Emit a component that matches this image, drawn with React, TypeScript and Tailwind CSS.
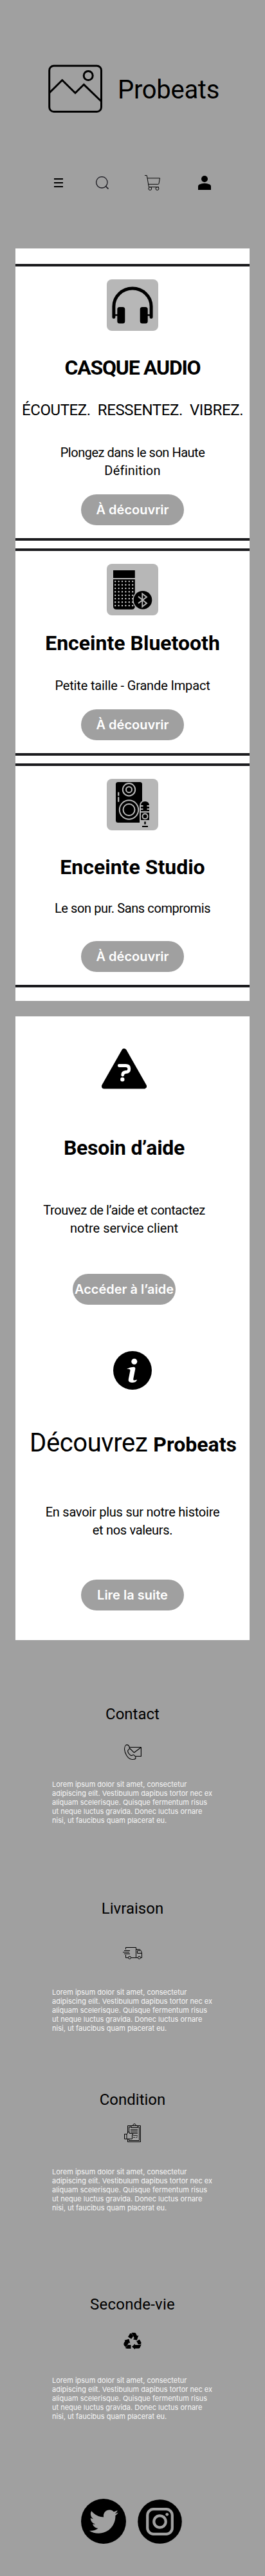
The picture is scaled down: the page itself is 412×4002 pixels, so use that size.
import type { ReactNode } from "react";
import { FaTwitter } from "react-icons/fa";

const LOREM = [
  "Lorem ipsum dolor sit amet, consectetur",
  "adipiscing elit. Vestibulum dapibus tortor nec ex",
  "aliquam scelerisque. Quisque fermentum risus",
  "ut neque luctus gravida. Donec luctus ornare",
  "nisi, ut faucibus quam placerat eu.",
];

function LogoIcon() {
  return (
    <svg width="84" height="75" viewBox="0 0 84 75" fill="none" stroke="#000" strokeWidth="3">
      <rect x="1.7" y="2.2" width="80.8" height="71.3" rx="7" />
      <circle cx="62.2" cy="17.5" r="7" />
      <path d="M2 44L21.7 24.5L42 44.5L55.4 31.3L82 57" />
    </svg>
  );
}

function MenuIcon() {
  return (
    <svg width="14" height="14" viewBox="0 0 14 14" stroke="#000" strokeWidth="1.9">
      <path d="M0 1h14M0 7h14M0 13h14" />
    </svg>
  );
}

function SearchIcon() {
  return (
    <svg width="20" height="20" viewBox="0 0 20 20" fill="none" stroke="#1c1b22" strokeWidth="1.3">
      <circle cx="9.3" cy="9.3" r="8.7" />
      <path d="M15.5 15.5L19.5 19.5" strokeWidth="1.7" />
    </svg>
  );
}

function CartIcon() {
  return (
    <svg width="24" height="24" viewBox="0 0 24 24" fill="none" stroke="#000" strokeWidth=".95">
      <path d="M0 .6H3.3L6.400 18.5H22M3.9 4.8H23.5L22 13.3Q21.8 14.3 20.8 14.3H5.7" />
      <circle cx="8.3" cy="21" r="2.4" />
      <circle cx="19.5" cy="21" r="2.4" />
    </svg>
  );
}

function UserIcon() {
  return (
    <svg width="20" height="22" viewBox="0 0 20 22" fill="#000">
      <circle cx="10" cy="5" r="5" />
      <path d="M0 22V16.5Q0 14.5 2 13.6Q6 11.8 10 11.8T18 13.6Q20 14.5 20 16.5V22Z" />
    </svg>
  );
}

function HeadphonesIcon() {
  return (
    <svg width="80" height="80" viewBox="0 0 80 80">
      <path d="M10.9 58.5V42A29.1 28 0 0 1 69.1 42V58.5" fill="none" stroke="#000" strokeWidth="5" strokeLinecap="round" />
      <path d="M11 55.5H20M60 55.5H69" stroke="#000" strokeWidth="2.6" />
      <rect x="16.3" y="43" width="12" height="25.5" rx="3.5" />
      <rect x="51.7" y="43" width="12" height="25.5" rx="3.5" />
    </svg>
  );
}

function BluetoothSpeakerIcon() {
  const dots: ReactNode[] = [];
  for (let row = 0; row < 8; row++) {
    for (let col = 0; col < 6; col++) {
      dots.push(<circle key={`${row}-${col}`} cx={13.2 + col * 5.4} cy={27.3 + row * 5.37} r="1.15" fill="#e4e4e4" />);
    }
  }
  return (
    <svg width="80" height="80" viewBox="0 0 80 80">
      <path d="M10 10H43.8V22H10ZM10 24H43.8V66Q43.8 70.8 39 70.8H15Q10 70.8 10 66Z" />
      {dots}
      <circle cx="56" cy="56.2" r="15.8" fill="#b7b7b7" />
      <circle cx="56" cy="56.2" r="14.3" />
      <path d="M49 50.7L62 61.2L55.3 66.5V46.5L62 51.5L49 61.2" fill="none" stroke="#b7b7b7" strokeWidth="1.9" />
    </svg>
  );
}

function StudioSpeakerIcon() {
  return (
    <svg width="80" height="80" viewBox="0 0 80 80" fill="none" stroke="#b7b7b7">
      <rect x="14" y="5" width="41" height="63" rx="3.5" fill="#000" stroke="none" />
      <circle cx="34.5" cy="16.7" r="9.7" strokeWidth="2" />
      <circle cx="34.5" cy="16.7" r="4.5" strokeWidth="2" />
      <circle cx="34.5" cy="48" r="14.7" strokeWidth="2" />
      <circle cx="34.5" cy="48" r="9" strokeWidth="2" />
      <path d="M18.2 21.5v4M18.2 29v6" strokeWidth="2.2" strokeLinecap="round" />
      <path d="M51 68V42Q51 33.5 59.5 33.5Q68 33.5 68 42V68Z" fill="#b7b7b7" stroke="none" />
      <path d="M53 41Q53.5 35 59.5 35T66 41H62.5V43.3H66V46H62.5V48H66V50.3H53V48H56.5V46H53V43.3H56.5V41Z" fill="#000" stroke="none" />
      <rect x="53" y="52.5" width="13" height="11.5" fill="#000" stroke="none" />
      <circle cx="59.5" cy="58.3" r="4" fill="#000" strokeWidth="2" />
      <path d="M59.5 66.5v4" stroke="#000" strokeWidth="2.5" />
      <path d="M55 74h9" stroke="#000" strokeWidth="2" />
    </svg>
  );
}

function HelpIcon() {
  return (
    <svg width="70" height="63" viewBox="0 0 70 63">
      <path d="M35 4L66 58.5H4Z" stroke="#000" strokeWidth="8" strokeLinejoin="round" />
      <path d="M27.3 26.5H37.5Q42.8 26.5 42.8 31.5T37.5 36.5Q32.7 37 32.7 41" fill="none" stroke="#fff" strokeWidth="4.8" strokeLinecap="round" />
      <circle cx="32.3" cy="48" r="3.2" fill="#fff" />
    </svg>
  );
}

function InfoIcon() {
  return (
    <svg width="60" height="60" viewBox="0 0 60 60">
      <circle cx="30" cy="30" r="30" />
      <circle cx="32.8" cy="16.3" r="4.5" fill="#fff" />
      <path d="M21 28Q27 24.500 32 24.8Q34.8 25 34.3 28L31.2 43.5Q30.9 45.8 33.5 45.3L37 44.5Q36.5 48 31.500 48.8Q22.5 49.8 23.8 43.5L26.4 30.5Q26.7 28 24.5 28Z" fill="#fff" />
    </svg>
  );
}

function ContactIcon() {
  return (
    <svg width="27" height="24" viewBox="0 0 27 24" fill="none" stroke="#000" strokeWidth="1.1" strokeLinejoin="round">
      <path d="M4 .6C1.5 1 .5 5 .6 8C1 14 5.5 21.5 10.5 23C13 23.8 16.5 23.3 17.8 22C18.5 19.5 16.5 17 14.5 16.3C12.5 16.5 12 18 10.5 17.3C8.5 16 6 12.5 5.6 10.3C5.5 8.5 8 8 8.3 6.5C8.5 3.5 7 .5 4 .6Z" />
      <path d="M8 4.5H26.4V18.5H17.8M8.5 6L15.5 12.8L26.2 4.8" />
    </svg>
  );
}

function TruckIcon() {
  return (
    <svg width="30" height="19" viewBox="0 0 30 19" fill="none" stroke="#000" strokeWidth="1">
      <path d="M4.5 3.5V.5H20.5V16.5H13M4.5 12V16.5H8M2 5.5H11M0 8H10M2 10.5H11M20.5 3.5H26.5Q29.5 6 29.5 10V16.5H28M22.5 5.5V9.5H29M22.5 5.5H27M20.5 16.5H23" />
      <circle cx="10.5" cy="16.3" r="2" />
      <circle cx="25.5" cy="16.3" r="2" />
    </svg>
  );
}

function ConditionIcon() {
  return (
    <svg width="26" height="29" viewBox="0 0 26 29" fill="none" stroke="#000" strokeWidth="1">
      <path d="M5.5 15V3.5H25.5V28.5H5.5V24M7.5 13V5.5H11M21 5.5H23.5V26.5H7.5V24" />
      <path d="M11 6.5V3.5H13.5Q14 .5 16 .5T18.5 3.5H21V6.5Z" />
      <path d="M10 9.5H21M10 11.5H21M10 13.5H21M12 15.5H21M14 18.5H21M14 21.5H17M18 22L21 20.5" strokeWidth=".8" />
      <path d="M.5 16.5H4V24H.5ZM4 17L7 12.5Q8.5 12 8.5 15.5H13.5V17.5H12.5V24H4" />
    </svg>
  );
}

function RecycleIcon() {
  return (
    <svg width="28" height="26" viewBox="0 0 28 26" fill="#000">
      <path d="M7 6.5L10.2 1.3Q11.700 .2 13.2 2L15.2 5.200L12.2 9.800Z" />
      <path d="M12.5 0H17Q18.500 0 19.3 1.3L21.2 5L23.3 4.2L20.8 11.8L14.800 10.200L16.800 8.600Z" />
      <path d="M20.200 13.2L24.8 10.5L27.2 14.5Q28.3 17 26 18.2H23Z" />
      <path d="M27.800 18.200L25.500 23.300Q24.800 24.600 23.300 24.600H18V26L13 21.800L18 17.200V19H24.500Q26.500 19 27.800 18.200Z" />
      <path d="M1.500 11.800L8.500 9.800L10.300 16.500L8.300 15.500L4.500 22Q2.500 22.500 .8 19.500Q-.2 17.500 1 15.500L2.600 12.800Z" />
      <path d="M6.500 19H11.500V24.800H5.500Q3.500 24.800 2.500 23Q4.800 22.800 6.500 19Z" />
    </svg>
  );
}

function InstagramIcon() {
  return (
    <svg width="69" height="69" viewBox="0 0 69 69" fill="none" stroke="#a0a0a0">
      <circle cx="34.5" cy="34.5" r="34.3" fill="#000" stroke="none" />
      <rect x="15.2" y="15.2" width="38.6" height="38.6" rx="9.5" strokeWidth="4.2" />
      <circle cx="34.5" cy="34.5" r="9.2" strokeWidth="4.2" />
      <circle cx="45.7" cy="23.3" r="2.4" fill="#a0a0a0" stroke="none" />
    </svg>
  );
}

function PillButton({ children }: { children: ReactNode }) {
  return (
    <button className="flex h-12 w-40 items-center justify-center rounded-full bg-[#a0a0a0] font-['Inter',sans-serif] text-xl font-semibold whitespace-nowrap text-white">
      {children}
    </button>
  );
}

function IconTile({ children }: { children: ReactNode }) {
  return <div className="size-20 rounded-lg bg-[#b7b7b7]">{children}</div>;
}

function Lorem() {
  return (
    <p className="ml-[81px] font-['Inter',sans-serif] text-[11px] leading-[14px] whitespace-nowrap text-[#f7f7f7]">
      {LOREM.map((line) => (
        <span key={line} className="block">{line}</span>
      ))}
    </p>
  );
}

const card = "flex flex-col items-center border-y-4 border-[#1b1b1e] py-5";
const title = "text-[32px] leading-10 font-bold whitespace-nowrap";
const text = "flex flex-col items-center text-xl leading-7 whitespace-nowrap";
const footerTitle = "text-2xl leading-8 font-[450] whitespace-nowrap";

export default function App() {
  return (
    <div className="flex h-[4002px] w-[412px] flex-col items-stretch overflow-hidden bg-[#a0a0a0] font-['Roboto',sans-serif] text-black">
      <header className="flex h-[386px] flex-col">
        <div className="flex pt-[100px] pl-[75px]">
          <LogoIcon />
          <span className="mt-4 ml-6 text-[40px] leading-[48px] font-[450] tracking-[-0.3px]">Probeats</span>
        </div>
        <nav className="mt-[97px] flex">
          <div className="mt-[5px] ml-[84px]"><MenuIcon /></div>
          <div className="mt-[2px] ml-[51px]"><SearchIcon /></div>
          <div className="ml-[56px]"><CartIcon /></div>
          <div className="mt-px ml-[59px]"><UserIcon /></div>
        </nav>
      </header>

      <main className="mx-6 flex flex-col gap-6">
        <section className="flex flex-col gap-3 bg-white pt-6 pb-[21px]">
          <article className={card}>
            <IconTile><HeadphonesIcon /></IconTile>
            <h2 className={`mt-[37px] tracking-[-1.25px] ${title}`}>CASQUE AUDIO</h2>
            <h3 className="mt-[30px] text-2xl leading-8 font-[450] tracking-[-0.4px] whitespace-pre">ÉCOUTEZ.  RESSENTEZ.  VIBREZ.</h3>
            <p className={`mt-9 ${text}`}>
              <span className="tracking-[-0.48px]">Plongez dans le son Haute</span>
              <span className="tracking-[0.2px]">Définition</span>
            </p>
            <div className="mt-[23px]"><PillButton>À découvrir</PillButton></div>
          </article>
          <article className={card}>
            <IconTile><BluetoothSpeakerIcon /></IconTile>
            <h2 className={`mt-[23px] ${title}`}>Enceinte Bluetooth</h2>
            <p className={`mt-8 tracking-[-0.15px] ${text}`}>Petite taille - Grande Impact</p>
            <div className="mt-[23px]"><PillButton>À découvrir</PillButton></div>
          </article>
          <article className={card}>
            <IconTile><StudioSpeakerIcon /></IconTile>
            <h2 className={`mt-[37px] ${title}`}>Enceinte Studio</h2>
            <p className={`mt-[30px] tracking-[-0.4px] ${text}`}>Le son pur. Sans compromis</p>
            <div className="mt-[37px]"><PillButton>À découvrir</PillButton></div>
          </article>
        </section>

        <section className="flex flex-col bg-white pt-[50px] pb-[46px]">
          <div className="flex flex-col items-center pr-[26px]">
            <HelpIcon />
            <h2 className={`mt-[71px] tracking-[-0.3px] ${title}`}>Besoin d’aide</h2>
            <p className={`mt-[63px] ${text}`}>
              <span className="tracking-[-0.38px]">Trouvez de l’aide et contactez</span>
              <span>notre service client</span>
            </p>
            <div className="mt-[57px]"><PillButton>Accéder à l’aide</PillButton></div>
          </div>
          <div className="mt-[72px] flex flex-col items-center">
            <InfoIcon />
            <h2 className="mt-[59px] flex h-12 items-baseline gap-[9px] pl-0.5 text-[40px] leading-[48px] tracking-[-0.4px] whitespace-nowrap">
              <span>Découvrez</span>
              <strong className="text-[32px] leading-none font-bold tracking-normal">Probeats</strong>
            </h2>
            <p className={`mt-[69px] ${text}`}>
              <span className="tracking-[-0.24px]">En savoir plus sur notre histoire</span>
              <span className="tracking-[-0.3px]">et nos valeurs.</span>
            </p>
            <div className="mt-[63px]"><PillButton>Lire la suite</PillButton></div>
          </div>
        </section>
      </main>

      <footer className="flex flex-col items-center pt-[99px]">
        <h4 className={footerTitle}>Contact</h4>
        <div className="mt-[31px] pl-px"><ContactIcon /></div>
        <div className="mt-[31px] self-start"><Lorem /></div>

        <h4 className={`mt-[114px] ${footerTitle}`}>Livraison</h4>
        <div className="mt-11"><TruckIcon /></div>
        <div className="mt-11 self-start"><Lorem /></div>

        <h4 className={`mt-[88px] ${footerTitle}`}>Condition</h4>
        <div className="mt-[21px]"><ConditionIcon /></div>
        <div className="mt-[39px] self-start"><Lorem /></div>

        <h4 className={`mt-[127px] tracking-[0.2px] ${footerTitle}`}>Seconde-vie</h4>
        <div className="mt-7"><RecycleIcon /></div>
        <div className="mt-[41px] self-start"><Lorem /></div>

        <div className="mt-[121px] flex items-end gap-[18px] self-start pl-[126px]">
          <div className="flex size-[70px] items-center justify-center rounded-full bg-black">
            <FaTwitter className="size-[45px] text-[#a0a0a0]" />
          </div>
          <InstagramIcon />
        </div>
      </footer>
    </div>
  );
}
